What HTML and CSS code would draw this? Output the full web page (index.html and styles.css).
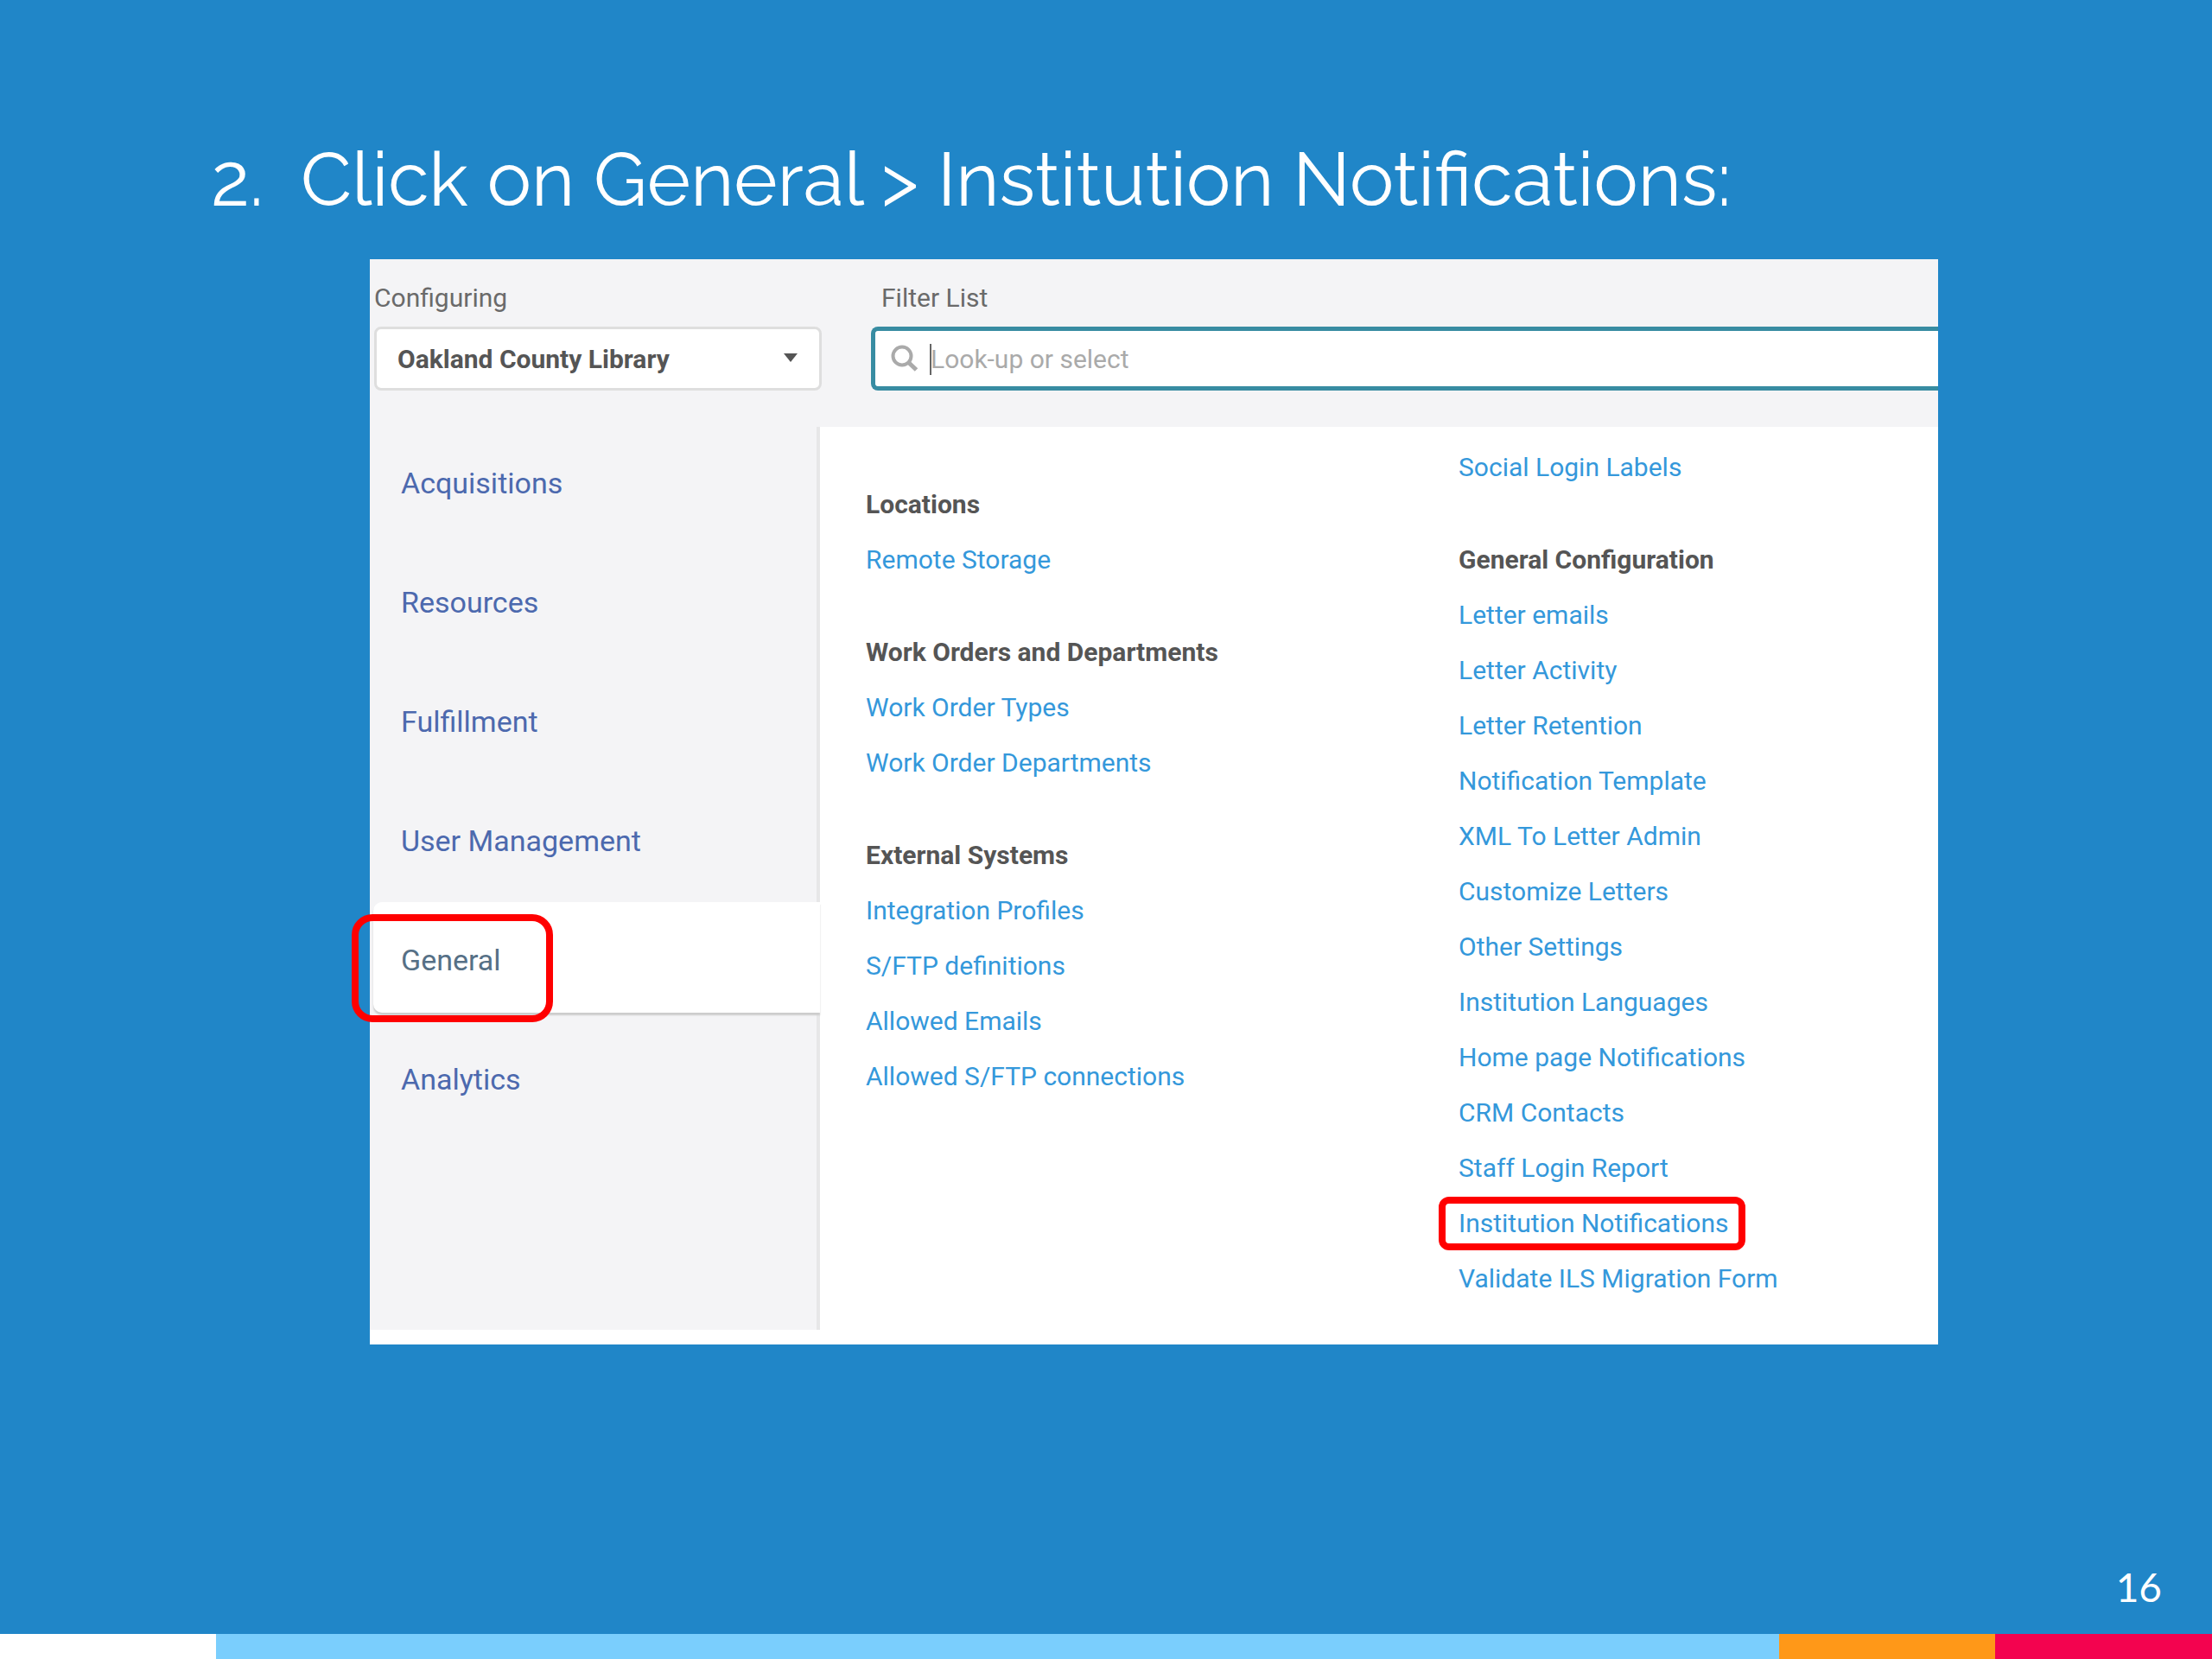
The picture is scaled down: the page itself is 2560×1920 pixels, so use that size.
FILE: index.html
```html
<!DOCTYPE html>
<html lang="en">
  <head>
    <meta charset="UTF-8">
    <title>Institution Notifications</title>
    <link rel="stylesheet" href="styles.css">
  </head>
  <body>
    <main class="slide">
      <h1 class="step"><span class="step-number">2.</span><span>Click on General &gt; Institution Notifications:</span></h1>

      <section class="panel">
        <form class="toolbar">
          <div class="field">
            <label for="institution">Configuring</label>
            <div class="select-wrap">
              <select id="institution">
                <option>Oakland County Library</option>
              </select>
              <svg class="arrow" viewBox="0 0 16 10" aria-hidden="true"><path d="M0 0h16L8 10z"/></svg>
            </div>
          </div>
          <div class="field field-filter">
            <label for="filter">Filter List</label>
            <div class="search">
              <svg class="search-icon" viewBox="0 0 32 32" aria-hidden="true">
                <circle cx="13" cy="13" r="10.5"/>
                <path class="handle" d="M20.5 20.5l9 8.5"/>
              </svg>
              <span class="caret"></span>
              <input type="text" id="filter" placeholder="Look-up or select">
            </div>
          </div>
        </form>

        <div class="content">
          <nav class="sidebar">
            <a href="#acquisitions">Acquisitions</a>
            <a href="#resources">Resources</a>
            <a href="#fulfillment">Fulfillment</a>
            <a href="#users">User Management</a>
            <a href="#general" class="active">General<span class="mark mark-tab"></span></a>
            <a href="#analytics">Analytics</a>
          </nav>

          <div class="column column-first">
            <section class="group">
              <h2>Locations</h2>
              <a href="#">Remote Storage</a>
            </section>
            <section class="group">
              <h2>Work Orders and Departments</h2>
              <a href="#">Work Order Types</a>
              <a href="#">Work Order Departments</a>
            </section>
            <section class="group">
              <h2>External Systems</h2>
              <a href="#">Integration Profiles</a>
              <a href="#">S/FTP definitions</a>
              <a href="#">Allowed Emails</a>
              <a href="#">Allowed S/FTP connections</a>
            </section>
          </div>

          <div class="column">
            <section class="group">
              <a href="#">Social Login Labels</a>
            </section>
            <section class="group">
              <h2>General Configuration</h2>
              <a href="#">Letter emails</a>
              <a href="#">Letter Activity</a>
              <a href="#">Letter Retention</a>
              <a href="#">Notification Template</a>
              <a href="#">XML To Letter Admin</a>
              <a href="#">Customize Letters</a>
              <a href="#">Other Settings</a>
              <a href="#">Institution Languages</a>
              <a href="#">Home page Notifications</a>
              <a href="#">CRM Contacts</a>
              <a href="#">Staff Login Report</a>
              <a href="#">Institution Notifications<span class="mark mark-link"></span></a>
              <a href="#">Validate ILS Migration Form</a>
            </section>
          </div>
        </div>
      </section>

      <footer>
        <p class="page-number">16</p>
        <div class="stripes">
          <span class="stripe white"></span>
          <span class="stripe sky"></span>
          <span class="stripe orange"></span>
          <span class="stripe pink"></span>
        </div>
      </footer>
    </main>
  </body>
</html>
```

FILE: styles.css
```css
* {
  box-sizing: border-box;
}
body {
  margin: 0;
  background-color: #2086c8;
  font-family: Roboto, sans-serif;
  font-size: 30px;
  color: #555;
}
a {
  text-decoration: none;
}
.slide {
  display: flex;
  flex-direction: column;
  min-height: 100vh;
}

/* heading */
.step {
  display: flex;
  align-items: baseline;
  margin: 0;
  padding: 156px 0 40px 244px;
  font-family: Raleway, Lato, sans-serif;
  font-size: 86px;
  font-weight: 400;
  line-height: 104px;
  color: white;
}
.step-number {
  width: 104px;
}

/* screen */
.panel {
  margin: 0 317px 0 428px;
  padding-bottom: 17px;
  background-color: white;
}
.toolbar {
  display: flex;
  gap: 57px;
  height: 194px;
  padding: 25px 0 0 5px;
  background-color: #f4f4f6;
}
.field {
  width: 518px;
}
.field-filter {
  flex: 1;
}
.field label {
  display: block;
  height: 53px;
  line-height: 40px;
  color: #6a6a6a;
}
.field-filter label {
  padding-left: 12px;
}
.select-wrap {
  position: relative;
}
select {
  appearance: none;
  width: 100%;
  height: 74px;
  padding: 0 24px;
  border: 3px solid #dedede;
  border-radius: 8px;
  background-color: white;
  font: bold 30px Roboto, sans-serif;
  color: #555;
}
.arrow {
  position: absolute;
  top: 31px;
  right: 28px;
  width: 16px;
  height: 10px;
  fill: #555;
}
.search {
  position: relative;
  display: flex;
  align-items: center;
  gap: 14px;
  height: 74px;
  padding-left: 18px;
  border: 5px solid #388ca2;
  border-right: 0;
  border-radius: 8px 0 0 8px;
  background-color: white;
}
.search-icon {
  width: 32px;
  height: 32px;
  fill: none;
  stroke: #aaa;
  stroke-width: 4;
}
.search-icon .handle {
  stroke-width: 5;
}
.caret {
  position: absolute;
  top: 15px;
  left: 63px;
  width: 2px;
  height: 36px;
  background-color: #666;
}
.search input {
  flex: 1;
  min-width: 0;
  padding: 0;
  border: 0;
  outline: 0;
  background: none;
  font: 30px Roboto, sans-serif;
  color: #555;
}
.search input::placeholder {
  color: #aaa;
}

/* menu */
.content {
  display: flex;
}
.sidebar {
  display: flex;
  flex-direction: column;
  gap: 17px;
  width: 521px;
  margin-right: 53px;
  padding: 5px 0 0 4px;
  background-color: #f4f4f6;
  box-shadow: inset -4px 0 #e7e7e8;
}
.sidebar a {
  position: relative;
  height: 121px;
  padding-left: 32px;
  font-size: 34px;
  line-height: 120px;
  color: #4c69ae;
}
.sidebar .active {
  height: 128px;
  margin-top: -7px;
  padding-top: 7px;
  border-radius: 10px 0 0 10px;
  background-color: white;
  box-shadow: 0 3px 2px #ccc;
  color: #567086;
}

/* links */
.column {
  flex: 1;
  padding: 15px 0 27px;
}
.column-first {
  flex: 0 0 686px;
  padding-top: 58px;
}
.group {
  display: flex;
  flex-direction: column;
  align-items: flex-start;
  margin-bottom: 43px;
}
.group:last-child {
  margin-bottom: 0;
}
.group h2 {
  margin: 0;
  font-size: 30px;
  font-weight: bold;
  line-height: 64px;
}
.group a {
  position: relative;
  line-height: 64px;
  color: #3498db;
}

/* red outlines */
.mark {
  position: absolute;
  border: 8px solid red;
}
.mark-tab {
  top: 14px;
  left: -25px;
  width: 233px;
  height: 125px;
  border-radius: 24px;
}
.mark-link {
  top: 1px;
  right: -20px;
  bottom: 1px;
  left: -23px;
  border-radius: 12px;
}

/* footer */
footer {
  margin-top: auto;
}
.page-number {
  margin: 0;
  padding: 0 58px 24px;
  font-family: Lato, sans-serif;
  font-size: 46px;
  line-height: 60px;
  text-align: right;
  color: white;
}
.stripes {
  display: grid;
  grid-template-columns: 250fr 1809fr 250fr 251fr;
  height: 29px;
}
.white {
  background-color: white;
}
.sky {
  background-color: #7acefd;
}
.orange {
  background-color: #ff9818;
}
.pink {
  background-color: #f3034f;
}
```
